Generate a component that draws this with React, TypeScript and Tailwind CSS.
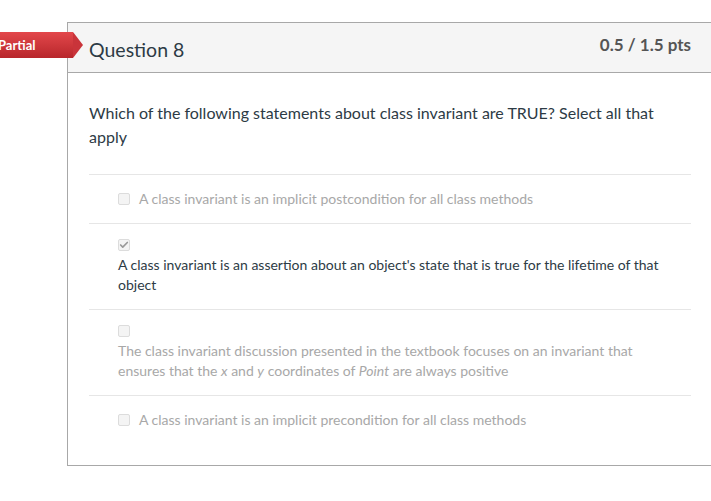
import { Check } from 'lucide-react'

type Answer = {
  id: string
  checked?: boolean
  inline: boolean
  selected?: boolean
  text: React.ReactNode
}

const answers: Answer[] = [
  { id: 'a1', inline: true, text: 'A class invariant is an implicit postcondition for all class methods' },
  {
    id: 'a2',
    inline: false,
    checked: true,
    selected: true,
    text: "A class invariant is an assertion about an object's state that is true for the lifetime of that object",
  },
  {
    id: 'a3',
    inline: false,
    text: (
      <>
        The class invariant discussion presented in the textbook focuses on an invariant that ensures that the{' '}
        <i>x</i> and <i>y</i> coordinates of <i>Point</i> are always positive
      </>
    ),
  },
  { id: 'a4', inline: true, text: 'A class invariant is an implicit precondition for all class methods' },
]

function Box({ checked }: { checked?: boolean }) {
  return (
    <span className="w-3 h-3 shrink-0 rounded-[2px] border border-[#dcdcdc] bg-[#f4f4f4] flex items-center justify-center">
      {checked && <Check className="w-2.5 h-2.5 text-[#999]" strokeWidth={4} />}
    </span>
  )
}

export default function App() {
  return (
    <div
      className="relative w-[711px] h-[501px] overflow-hidden bg-white pt-[22px]"
      style={{ fontFamily: 'Lato, "Open Sans", sans-serif' }}
    >
      <div className="absolute left-0 top-[32px] h-[26px] flex items-center z-10">
        <div className="h-full w-[73px] bg-gradient-to-b from-[#e3474b] to-[#b8262b] flex items-center">
          <span className="-ml-[2px] text-white font-bold text-[13px] leading-none">Partial</span>
        </div>
        <div className="h-0 w-0 border-y-[13px] border-y-transparent border-l-[10px] border-l-[#c9343a]" />
      </div>

      <div className="ml-[67px] w-[660px] border border-[#a8a8a8] border-r-0">
        <div className="h-[50px] bg-[#f5f5f5] border-b border-[#a8a8a8] flex items-center justify-between pl-[21px] pr-[36px]">
          <h2 className="text-[19.5px] text-[#2d3b45] pt-[4px]">Question 8</h2>
          <span className="text-[17px] font-bold text-[#555] -mt-[6px]">0.5 / 1.5 pts</span>
        </div>

        <div className="pl-[21px] pr-[36px] pt-[28px] pb-[21px]">
          <p className="text-[16px] leading-[24px] text-[#2d3b45] pb-[25px] pr-[20px]">
            Which of the following statements about class invariant are TRUE? Select all that apply
          </p>

          {answers.map((a) => (
            <div key={a.id} className="border-t border-[#e6e6e6] pl-[29px] pr-[20px]">
              {a.inline ? (
                <div className="flex items-center gap-[9px] py-[14px] text-[14px] leading-[20px] text-[#a8a8a8]">
                  <Box checked={a.checked} />
                  <span>{a.text}</span>
                </div>
              ) : (
                <div className="pt-[15px] pb-[14px]">
                  <Box checked={a.checked} />
                  <p
                    className={
                      'mt-[4px] text-[14px] leading-[20px] ' + (a.selected ? 'text-[#2d3b45]' : 'text-[#a8a8a8]')
                    }
                  >
                    {a.text}
                  </p>
                </div>
              )}
            </div>
          ))}
        </div>
      </div>
    </div>
  )
}
